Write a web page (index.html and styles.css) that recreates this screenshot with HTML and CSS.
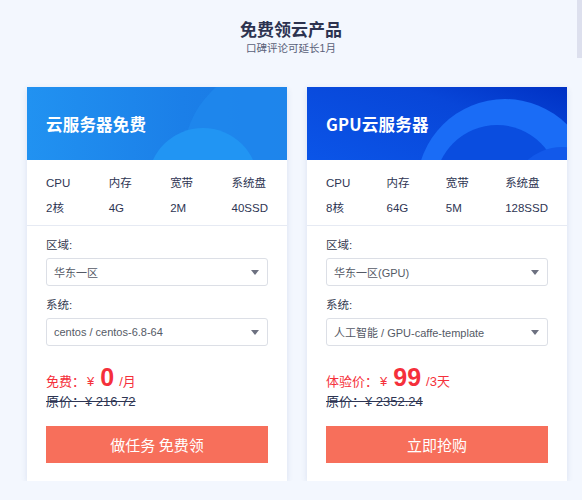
FILE: index.html
```html
<!DOCTYPE html>
<html lang="zh">
<head>
<meta charset="utf-8">
<title>免费领云产品</title>
<link rel="stylesheet" href="styles.css">
</head>
<body>
<div class="scroll-thumb"></div>
<div class="page">
  <h1 class="title">免费领云产品</h1>
  <p class="subtitle">口碑评论可延长1月</p>
  <div class="cards">
    <div class="card">
      <div class="card-head head-blue">
        <svg class="head-deco" width="260" height="73" viewBox="0 0 260 73">
          <circle cx="253" cy="73" r="97" fill="#1f88ee" opacity="0.8"/>
          <circle cx="176" cy="96" r="55" fill="#2195f3"/>
        </svg>
        <span class="head-title">云服务器免费</span>
      </div>
      <div class="specs">
        <div class="spec"><span>CPU</span><span>2核</span></div>
        <div class="spec"><span>内存</span><span>4G</span></div>
        <div class="spec"><span>宽带</span><span>2M</span></div>
        <div class="spec"><span>系统盘</span><span>40SSD</span></div>
      </div>
      <div class="body">
        <div class="field-label">区域:</div>
        <div class="select"><span>华东一区</span><i class="arrow"></i></div>
        <div class="field-label second">系统:</div>
        <div class="select"><span>centos / centos-6.8-64</span><i class="arrow"></i></div>
        <div class="price"><span>免费：</span><span class="yen">¥</span><span class="num">0</span><span class="unit">/月</span></div>
        <div class="orig">原价：¥ 216.72</div>
        <button class="btn">做任务 免费领</button>
      </div>
    </div>
    <div class="card">
      <div class="card-head head-dark">
        <svg class="head-deco" width="260" height="73" viewBox="0 0 260 73">
          <circle cx="198" cy="100" r="88" fill="#1a6cf6"/>
          <circle cx="190" cy="100" r="62" fill="#0a4ddf"/>
          <circle cx="255" cy="112" r="52" fill="#1259ea"/>
        </svg>
        <span class="head-title">GPU云服务器</span>
      </div>
      <div class="specs">
        <div class="spec"><span>CPU</span><span>8核</span></div>
        <div class="spec"><span>内存</span><span>64G</span></div>
        <div class="spec"><span>宽带</span><span>5M</span></div>
        <div class="spec"><span>系统盘</span><span>128SSD</span></div>
      </div>
      <div class="body">
        <div class="field-label">区域:</div>
        <div class="select"><span>华东一区(GPU)</span><i class="arrow"></i></div>
        <div class="field-label second">系统:</div>
        <div class="select"><span>人工智能 / GPU-caffe-template</span><i class="arrow"></i></div>
        <div class="price"><span>体验价：</span><span class="yen">¥</span><span class="num">99</span><span class="unit">/3天</span></div>
        <div class="orig">原价：¥ 2352.24</div>
        <button class="btn">立即抢购</button>
      </div>
    </div>
  </div>
</div>
</body>
</html>
```

FILE: styles.css
```css
html, body {
  margin: 0;
  padding: 0;
  background: #f3f7fe;
}
body {
  font-family: "Liberation Sans", "Noto Sans CJK SC", sans-serif;
  color: #2e3553;
}
.scroll-thumb {
  position: fixed;
  top: 0;
  right: 0;
  width: 5px;
  height: 58px;
  background: #dde0ee;
}
.page {
  padding-top: 18px;
}
.title {
  margin: 0;
  text-align: center;
  font-family: "Noto Sans CJK SC", sans-serif;
  font-size: 17px;
  line-height: 22px;
  font-weight: 700;
  color: #2d3350;
}
.subtitle {
  margin: 0;
  text-align: center;
  font-size: 10.5px;
  line-height: 16px;
  color: #596078;
}
.cards {
  display: flex;
  gap: 20px;
  padding-left: 27px;
  margin-top: 31px;
}
.card {
  width: 260px;
  background: #fff;
  box-shadow: 0 2px 6px rgba(40, 70, 140, 0.12);
}
.card-head {
  position: relative;
  height: 73px;
  overflow: hidden;
  display: flex;
  align-items: center;
  padding-left: 19px;
}
.head-blue {
  background: linear-gradient(90deg, #2192f1 0%, #1b7fe8 60%, #1a78e2 100%);
}
.head-dark {
  background: linear-gradient(200deg, #0031c4 0%, #0846d8 35%, #0b55e8 100%);
}
.head-deco {
  position: absolute;
  left: 0;
  top: 0;
}
.head-title {
  position: relative;
  color: #fff;
  font-family: "Noto Sans CJK SC", sans-serif;
  font-size: 16.5px;
  font-weight: 700;
  letter-spacing: 0.2px;
}
.specs {
  display: flex;
  justify-content: space-between;
  padding: 15px 19px 9px;
  border-bottom: 1px solid #e6eaf3;
  font-size: 11.5px;
  color: #2e3553;
}
.spec {
  display: flex;
  flex-direction: column;
  gap: 9px;
  line-height: 16px;
}
.body {
  padding: 11px 19px 18px;
}
.field-label {
  font-size: 11.5px;
  line-height: 16px;
  color: #333a50;
}
.field-label.second {
  margin-top: 11px;
}
.select {
  margin-top: 5px;
  height: 28px;
  box-sizing: border-box;
  border: 1px solid #dcdfe6;
  border-radius: 3px;
  display: flex;
  align-items: center;
  justify-content: space-between;
  padding: 0 8px 0 7px;
  font-size: 11px;
  color: #555a66;
}
.arrow {
  width: 0;
  height: 0;
  border-left: 4.5px solid transparent;
  border-right: 4.5px solid transparent;
  border-top: 5px solid #6d7180;
}
.price {
  margin-top: 17px;
  height: 28px;
  display: flex;
  align-items: baseline;
  color: #f5303b;
  font-size: 13px;
}
.price .yen {
  margin-left: 2px;
}
.price .num {
  font-size: 25px;
  font-weight: 700;
  margin: 0 5px 0 6px;
  line-height: 28px;
}
.orig {
  margin-top: 3px;
  font-size: 13px;
  line-height: 16px;
  color: #2e3553;
  text-decoration: line-through;
}
.btn {
  display: block;
  width: 100%;
  margin-top: 16px;
  height: 37px;
  border: none;
  background: #f76f5b;
  color: #fff;
  font-family: "Noto Sans CJK SC", sans-serif;
  font-size: 15px;
  cursor: pointer;
}
```
